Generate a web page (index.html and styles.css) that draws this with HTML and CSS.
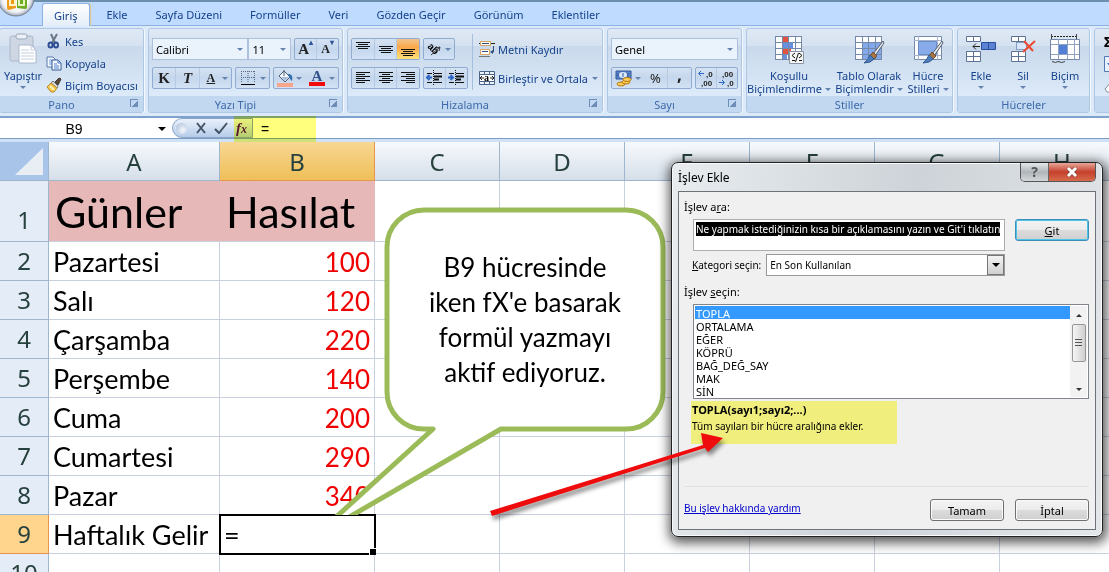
FILE: index.html
```html
<!DOCTYPE html>
<html lang="tr">
<head>
<meta charset="utf-8">
<title>İşlev Ekle</title>
<link rel="stylesheet" href="styles.css">
</head>
<body>
<div class="app">
  <header class="tabs">
    <button class="office" aria-label="Office">
      <svg width="36" height="18" viewBox="0 0 36 18"><defs><radialGradient id="orb" cx=".5" cy=".5" r=".5"><stop offset="0" stop-color="#fff"/><stop offset=".75" stop-color="#f4f5f7"/><stop offset=".9" stop-color="#c9ced6"/><stop offset="1" stop-color="#8a94a3"/></radialGradient></defs><circle cx="16" cy="-2" r="18" fill="url(#orb)" stroke="#7b8798"/><path d="M7 0v8q0 2 2 2l7-2V0z" fill="#f09a1c"/><path d="M17 0v8l8 1q2 0 2-2V0z" fill="#6dab22"/><path d="M10 0v5h5V0" fill="none" stroke="#fff3c8" stroke-width="2"/><path d="M19 0v5h5V0" fill="none" stroke="#e5f5bd" stroke-width="2"/></svg>
    </button>
    <nav class="tablist">
      <button class="tab active">Giriş</button><button class="tab">Ekle</button><button class="tab">Sayfa Düzeni</button><button class="tab">Formüller</button><button class="tab">Veri</button><button class="tab">Gözden Geçir</button><button class="tab">Görünüm</button><button class="tab">Eklentiler</button>
    </nav>
  </header>

  <div class="ribbon">
    <section class="group g-pano">
      <div class="body">
        <button class="big">
          <svg width="30" height="32" viewBox="0 0 30 32"><rect x="2" y="3" width="23" height="25" rx="2" fill="#cdd6e2" stroke="#aab7c8"/><rect x="8" y="1" width="11" height="5" rx="2" fill="#edf1f6" stroke="#98a7bb"/><path d="M11 12h12l5 5v13H11z" fill="#fff" stroke="#a9b9ce"/><path d="M23 12v5h5M13 17h8M13 20h13M13 23h13M13 26h13" fill="none" stroke="#c5d0df"/></svg>
          <span>Yapıştır</span><i class="dd"></i>
        </button>
        <div class="stack">
          <button class="line"><svg width="16" height="16" viewBox="0 0 16 16"><path d="M5 1l4 9M11 1L6 10" stroke="#6b7685" stroke-width="2" fill="none"/><ellipse cx="4.500" cy="12" rx="2" ry="2.500" fill="none" stroke="#2c4d93" stroke-width="2"/><ellipse cx="10" cy="12" rx="2" ry="2.500" fill="none" stroke="#2c4d93" stroke-width="2"/></svg>Kes</button>
          <button class="line"><svg width="16" height="16" viewBox="0 0 16 16"><path d="M1 2h6l2 2v8H1z" fill="#f4f9ff" stroke="#5877ac"/><path d="M3 5h4M3 7h4M3 9h4" stroke="#6f9bdc"/><path d="M6 5h6l3 3v7H6z" fill="#f4f9ff" stroke="#355895"/><path d="M12 5v3h3M8 9h3M8 11h5M8 13h5" fill="none" stroke="#4c7fcc"/></svg>Kopyala</button>
          <button class="line"><svg width="16" height="16" viewBox="0 0 16 16"><path d="M9 5l4-4 2 1-3 6z" fill="#5b4a3a" stroke="#3d352f"/><path d="M7 4l5 5-1 2-6-5z" fill="#d9dde4" stroke="#777"/><path d="M5 6l6 5-3 4H5L1 10z" fill="#f4c84f" stroke="#b98a24"/><path d="M4 9l4 4" stroke="#fff0b8" stroke-width="2"/></svg>Biçim Boyacısı</button>
        </div>
      </div>
      <footer><span>Pano</span><button class="launch" aria-label="Pano ayrıntıları"></button></footer>
    </section>

    <section class="group g-font">
      <div class="body rows">
        <div class="row">
          <label class="combo c-font"><select aria-label="Yazı tipi"><option>Calibri</option></select><i class="dd"></i></label><label class="combo c-size"><select aria-label="Boyut"><option>11</option></select><i class="dd"></i></label>
          <div class="set grow"><button aria-label="Büyüt" class="serif s15">A<sup>▴</sup></button><button aria-label="Küçült" class="serif s12">A<sup>▾</sup></button></div>
        </div>
        <div class="row">
          <div class="set s-bold"><button class="serif s15">K</button><button class="serif s15"><em>T</em></button><button class="serif s12"><u>A</u></button><i class="dd"></i></div>
          <div class="set s-border"><button aria-label="Kenarlık"><svg width="14" height="14" viewBox="0 0 14 14"><path d="M.5 0v12M7 0v12M13.500 0v12M0 .5h14M0 6.500h14" stroke="#566b8c" stroke-dasharray="1 1" fill="none"/><path d="M0 13.500h14" stroke="#000"/></svg></button><i class="dd"></i></div>
          <div class="set s-fill"><button aria-label="Dolgu"><svg width="17" height="18" viewBox="0 0 17 18"><path d="M7 2l6 6-5 5-6-6z" fill="#f3f7fc" stroke="#4b5f7d"/><path d="M4 8h8l-4 4z" fill="#a8bedd"/><path d="M7 7V1" stroke="#4b5f7d"/><path d="M11 5c4 0 5 2 4 7-2-1-2-3-3-4z" fill="#376fb3"/><path d="M0 14h16v4H0z" fill="#f8a68b"/></svg></button><i class="dd"></i><button class="fontcolor serif" aria-label="Yazı rengi">A</button><i class="dd"></i></div>
        </div>
      </div>
      <footer><span>Yazı Tipi</span><button class="launch" aria-label="Yazı tipi ayrıntıları"></button></footer>
    </section>

    <section class="group g-align">
      <div class="body split">
        <div class="rows">
          <div class="row">
            <div class="set three"><button aria-label="Üste hizala"><svg width="16" height="18" viewBox="0 0 16 18"><path d="M1 2.500h14M3 4.500h10M1 6.500h14M3 8.500h10" stroke="#111" fill="none"/></svg></button><button aria-label="Ortala"><svg width="16" height="18" viewBox="0 0 16 18"><path d="M1 6.500h14M3 8.500h10M1 10.500h14M3 12.500h10" stroke="#111" fill="none"/></svg></button><button class="on" aria-label="Alta hizala"><svg width="16" height="18" viewBox="0 0 16 18"><path d="M1 9.500h14M3 11.500h10M1 13.500h14M3 15.500h10" stroke="#111" fill="none"/></svg></button></div>
            <div class="set s-rot"><button aria-label="Yönlendirme"><svg width="17" height="16" viewBox="0 0 17 16"><text x="0" y="8" class="rot" transform="rotate(45 3 8)">ab</text><path d="M5 14L14 6M14 6l-4 1M14 6l-1 4" stroke="#333" fill="none"/></svg></button><i class="dd"></i></div>
          </div>
          <div class="row">
            <div class="set three"><button aria-label="Sola"><svg width="16" height="16" viewBox="0 0 16 16"><path d="M1 2.500h14M1 4.500h9M1 6.500h14M1 8.500h9M1 10.500h14M1 12.500h9" stroke="#111" fill="none"/></svg></button><button aria-label="Ortaya"><svg width="16" height="16" viewBox="0 0 16 16"><path d="M1 2.500h14M4 4.500h8M1 6.500h14M4 8.500h8M1 10.500h14M4 12.500h8" stroke="#111" fill="none"/></svg></button><button aria-label="Sağa"><svg width="16" height="16" viewBox="0 0 16 16"><path d="M1 2.500h14M6 4.500h9M1 6.500h14M6 8.500h9M1 10.500h14M6 12.500h9" stroke="#111" fill="none"/></svg></button></div>
            <div class="set two"><button aria-label="Girintiyi azalt"><svg width="17" height="16" viewBox="0 0 17 16"><path d="M1 3.500h5M8 3.500h8M1 12.500h5M8 12.500h8" stroke="#111"/><path d="M8 6.500h8M8 9.500h5" stroke="#111" stroke-width="2"/><path d="M7.500 0v16" stroke="#111" stroke-dasharray="1 1"/><path d="M6 7.500H2M3.500 5L1 7.500 3.500 10" stroke="#2e66c4" stroke-width="2" fill="none"/></svg></button><button aria-label="Girintiyi artır"><svg width="17" height="16" viewBox="0 0 17 16"><path d="M1 3.500h5M8 3.500h8M1 12.500h5M8 12.500h8" stroke="#111"/><path d="M8 6.500h8M8 9.500h5" stroke="#111" stroke-width="2"/><path d="M7.500 0v16" stroke="#111" stroke-dasharray="1 1"/><path d="M0 7.500h4M2.500 5L5 7.500 2.500 10" stroke="#2e66c4" stroke-width="2" fill="none"/></svg></button></div>
          </div>
        </div>
        <div class="wraps">
          <button class="line"><svg width="16" height="16" viewBox="0 0 16 16"><path d="M0 2.500h16" stroke="#222"/><path d="M1.500.5h10v4h-10zM1.500 8.500h9v5h-9z" fill="#fff" stroke="#d9a462"/><path d="M3 2.500h7M3 10.500h6M14.500 5v6H12" stroke="#30507c" fill="none"/><path d="M11 11l3-2v4z" fill="#30507c"/><path d="M0 15.500h11" stroke="#777"/></svg>Metni Kaydır</button>
          <button class="line"><svg width="16" height="16" viewBox="0 0 16 16"><path d="M.5 1.500h15v13H.5zM5.500 1.500v13M10.500 1.500v13M.5 4.500h15M.5 11.500h15" fill="#eaf2fc" stroke="#4c6487"/><path d="M1 5h14v6H1z" fill="#fff"/><path d="M1 8h4M11 8h4" stroke="#222"/><path d="M3 6L1 8l2 2M13 6l2 2-2 2" stroke="#222" fill="none"/><text x="5" y="11" class="merge">a</text></svg>Birleştir ve Ortala<i class="dd"></i></button>
        </div>
      </div>
      <footer><span>Hizalama</span><button class="launch" aria-label="Hizalama ayrıntıları"></button></footer>
    </section>

    <section class="group g-num">
      <div class="body rows">
        <div class="row"><label class="combo c-num"><select aria-label="Sayı biçimi"><option>Genel</option></select><i class="dd"></i></label></div>
        <div class="row">
          <div class="set s-money"><button aria-label="Para birimi"><svg width="17" height="17" viewBox="0 0 17 17"><path d="M1 1h15v8H1z" fill="#5c85c8" stroke="#2d549a"/><ellipse cx="8" cy="5" rx="4" ry="3" fill="#dae8fa"/><path d="M8 3v4M3 3v4M13 3v4" stroke="#2d549a"/><g fill="#ffcc57" stroke="#b57a15"><ellipse cx="6" cy="14" rx="4" ry="2"/><ellipse cx="11" cy="12" rx="4" ry="2"/><ellipse cx="12" cy="9.500" rx="4" ry="2"/></g></svg></button><i class="dd"></i><button class="pct">%</button><button class="comma">,</button></div>
          <div class="set s-dec"><button aria-label="Ondalık artır"><svg width="18" height="20" viewBox="0 0 18 20"><path d="M7 5.500H2M4 3L1.500 5.500 4 8" stroke="#2967c7" fill="none"/><text x="9" y="9" class="dec">,0</text><text x="4" y="18" class="dec">,00</text></svg></button><button aria-label="Ondalık azalt"><svg width="18" height="20" viewBox="0 0 18 20"><text x="4" y="9" class="dec">,00</text><path d="M1 14.500h5M4 12l2.500 2.500L4 17" stroke="#2967c7" fill="none"/><text x="9" y="18" class="dec">,0</text></svg></button></div>
        </div>
      </div>
      <footer><span>Sayı</span><button class="launch" aria-label="Sayı ayrıntıları"></button></footer>
    </section>

    <section class="group g-style">
      <div class="body bigs">
        <button class="big w1"><svg width="32" height="32" viewBox="0 0 32 32"><path d="M2 3h27v24H2z" fill="#fff"/><path d="M9 3h6v6H9z" fill="#e2523f"/><path d="M9 9h11v6H9z" fill="#6790e0"/><path d="M9 15h9v6H9z" fill="#e2523f"/><path d="M9 21h5v6H9z" fill="#6790e0"/><path d="M2.500 3v24M9.500 3v24M15.500 3v24M22.500 3v24M28.500 3v24M2 3.500h27M2 9.500h27M2 15.500h27M2 21.500h27M2 26.500h27" stroke="#7488aa"/><path d="M16.500 18.500h14v12h-14z" fill="#f7f7f7" stroke="#8b95a5"/><path d="M22 20l-3 2.500 3 2.500M26 20l3 2.500-3 2.500M19 27.500h3M26 27.500h3M22.500 29l3-9" stroke="#111" fill="none"/></svg><span>Koşullu</span><span>Biçimlendirme<i class="dd"></i></span></button>
        <button class="big w2"><svg width="32" height="32" viewBox="0 0 32 32"><path d="M2 3h27v24H2z" fill="#fff"/><path d="M9 9h20v18H9z" fill="#83a9ea"/><path d="M2.500 3v24M9.500 3v24M15.500 3v24M22.500 3v24M28.500 3v24M2 3.500h27M2 9.500h27M2 15.500h27M2 21.500h27M2 26.500h27" stroke="#7488aa"/><path d="M30 8L20 21l2 2 9-13z" fill="#e3e7ec" stroke="#58606c"/><path d="M20 19l4 4-3 3-4-3z" fill="#a87545" stroke="#6f4b2a"/><path d="M17 22l4 4q-3 4-10 4 4-3 6-8z" fill="#4e7fbd" stroke="#315b92"/></svg><span>Tablo Olarak</span><span>Biçimlendir<i class="dd"></i></span></button>
        <button class="big w3"><svg width="32" height="32" viewBox="0 0 32 32"><path d="M2.500 3.500h27v23h-27z" fill="#fff" stroke="#7488aa"/><path d="M6.500 3v24M25.500 3v24M2 7.500h27M2 22.500h27" stroke="#a4b3cb"/><path d="M6.500 8.500h18v13h-18z" fill="#88ace9" stroke="#6c8cc9"/><path d="M30 8L20 21l2 2 9-13z" fill="#e3e7ec" stroke="#58606c"/><path d="M20 19l4 4-3 3-4-3z" fill="#a87545" stroke="#6f4b2a"/><path d="M17 22l4 4q-3 4-10 4 4-3 6-8z" fill="#4e7fbd" stroke="#315b92"/></svg><span>Hücre</span><span>Stilleri<i class="dd"></i></span></button>
      </div>
      <footer><span>Stiller</span></footer>
    </section>

    <section class="group g-cell">
      <div class="body bigs">
        <button class="big w4"><svg width="32" height="32" viewBox="0 0 32 32"><path d="M1.500 3.500h14v5h-14zM8.500 3v5M1.500 18.500h14v10h-14zM8.500 18v10M1 23.500h14" fill="#fff" stroke="#5d7294"/><path d="M16.500 9.500h14v7h-14zM23.500 9v7" fill="#5b82d4" stroke="#284d99"/><path d="M15 13.500H8M11 10.500l-3 3 3 3" stroke="#222" fill="none"/></svg><span>Ekle</span><i class="dd"></i></button>
        <button class="big w4"><svg width="32" height="32" viewBox="0 0 32 32"><path d="M4.500 3.500h14v5h-14zM11.500 3v5M4.500 18.500h14v10h-14zM11.500 18v10M4 23.500h14" fill="#fff" stroke="#5d7294"/><path d="M9.500 9.500h10v7h-10z" fill="#d8e7fc" stroke="#37588c" stroke-dasharray="1 1"/><path d="M17 8l9 10M28 8L16 19" stroke="#ed492f" stroke-width="2"/></svg><span>Sil</span><i class="dd"></i></button>
        <button class="big w4"><svg width="32" height="32" viewBox="0 0 32 32"><path d="M1.500 6.500h29v20h-29z" fill="#fff" stroke="#7488aa"/><path d="M9.500 6v20M18.500 6v20M25.500 6v20M2 11.500h28M2 21.500h28" stroke="#8fa2bf"/><path d="M10 12h8v9h-8z" fill="#527fd6"/><path d="M2 3.500h26" stroke="#222" stroke-dasharray="2 1"/><path d="M2.500 1v5M27.500 1v5M3 28.500q4 2 6 0 4 2 7 0" stroke="#444" fill="none"/></svg><span>Biçim</span><i class="dd"></i></button>
      </div>
      <footer><span>Hücreler</span></footer>
    </section>

    <section class="group g-edit">
      <div class="body edits"><button class="sigma">Σ</button><button aria-label="Doldur"><svg width="16" height="16" viewBox="0 0 16 16"><path d="M.5.5h15v15H.5z" fill="#e8f1ff" stroke="#5275b6"/><path d="M6 3h4v4h3l-5 6-5-6h3z" fill="#3c76dd"/></svg></button><button aria-label="Temizle"><svg width="16" height="16" viewBox="0 0 16 16"><path d="M1 11l7-8h8v6l-5 5H3z" fill="#fff" stroke="#878f9b"/></svg></button></div>
      <footer></footer>
    </section>
  </div>

  <div class="formulabar">
    <input class="name" aria-label="Ad kutusu" value="B9">
    <button class="namedrop" aria-label="Ad listesi"><i class="tri"></i></button>
    <div class="fxtools">
      <i class="knob"></i>
      <button aria-label="İptal et"><svg width="12" height="12" viewBox="0 0 12 12"><path d="M2 1l8 10M10 1L2 11" stroke="#465366" stroke-width="2"/></svg></button>
      <button aria-label="Gir"><svg width="14" height="12" viewBox="0 0 14 12"><path d="M1 7l4 4 8-10" fill="none" stroke="#465366" stroke-width="2"/></svg></button>
      <button class="fx" aria-label="İşlev ekle">f<small>x</small></button>
    </div>
    <input class="formula" aria-label="Formül" value="=">
    <div class="marker"></div>
  </div>

  <main class="sheet">
    <table>
      <colgroup><col class="cr"><col class="ca"><col class="cb"><col class="cx"><col class="cx"><col class="cx"><col class="cx"><col class="cx"><col class="cx"></colgroup>
      <thead><tr><th class="corner"><svg width="30" height="32" viewBox="0 0 30 32"><path d="M28 2v27H0z" fill="#e9eef5"/></svg></th><th>A</th><th class="sel">B</th><th>C</th><th>D</th><th>E</th><th>F</th><th>G</th><th>H</th></tr></thead>
      <tbody>
        <tr class="first"><th>1</th><td>Günler</td><td>Hasılat</td><td></td><td></td><td></td><td></td><td></td><td></td></tr>
        <tr><th>2</th><td>Pazartesi</td><td class="n">100</td><td></td><td></td><td></td><td></td><td></td><td></td></tr>
        <tr><th>3</th><td>Salı</td><td class="n">120</td><td></td><td></td><td></td><td></td><td></td><td></td></tr>
        <tr><th>4</th><td>Çarşamba</td><td class="n">220</td><td></td><td></td><td></td><td></td><td></td><td></td></tr>
        <tr><th>5</th><td>Perşembe</td><td class="n">140</td><td></td><td></td><td></td><td></td><td></td><td></td></tr>
        <tr><th>6</th><td>Cuma</td><td class="n">200</td><td></td><td></td><td></td><td></td><td></td><td></td></tr>
        <tr><th>7</th><td>Cumartesi</td><td class="n">290</td><td></td><td></td><td></td><td></td><td></td><td></td></tr>
        <tr><th>8</th><td>Pazar</td><td class="n">340</td><td></td><td></td><td></td><td></td><td></td><td></td></tr>
        <tr><th class="sel">9</th><td>Haftalık Gelir</td><td class="cursor">=</td><td></td><td></td><td></td><td></td><td></td><td></td></tr>
        <tr><th>10</th><td></td><td></td><td></td><td></td><td></td><td></td><td></td><td></td></tr>
      </tbody>
    </table>
  </main>

  <div class="callout">
    <svg width="340" height="310" viewBox="0 0 340 310"><path d="M98 4H300a37 37 0 0 1 37 37V186a37 37 0 0 1-37 37H175L-13 332 107 223H98a37 37 0 0 1-37-37V41A37 37 0 0 1 98 4z" fill="#fff" stroke="#9bbb59" stroke-width="5" stroke-linejoin="round"/></svg>
    <p>B9 hücresinde<br>iken fX'e basarak<br>formül yazmayı<br>aktif ediyoruz.</p>
  </div>

  <form class="dialog" role="dialog" aria-label="İşlev Ekle">
    <div class="titlebar"><span>İşlev Ekle</span>
      <div class="winbtns"><button type="button" class="help">?</button><button type="button" class="close" aria-label="Kapat"><svg width="12" height="10" viewBox="0 0 12 10"><path d="M2 1l8 8M10 1L2 9" stroke="#6d3a35" stroke-width="4"/><path d="M2 1l8 8M10 1L2 9" stroke="#fff" stroke-width="3"/></svg></button></div>
    </div>
    <div class="panel">
      <label class="lab" for="q">İşlev a<u>r</u>a:</label>
      <div class="search"><div class="searchbox"><input id="q" value="Ne yapmak istediğinizin kısa bir açıklamasını yazın ve Git'i tıklatın"></div><button type="button" class="btn default"><u>G</u>it</button></div>
      <div class="cat"><label for="cat"><u>K</u>ategori seçin:</label><div class="catbox"><select id="cat"><option>En Son Kullanılan</option></select><span class="catarrow"><i class="tri"></i></span></div></div>
      <label class="lab second" for="fn">İşlev <u>s</u>eçin:</label>
      <div class="listbox">
        <select id="fn" size="7"><option selected>TOPLA</option><option>ORTALAMA</option><option>EĞER</option><option>KÖPRÜ</option><option>BAĞ_DEĞ_SAY</option><option>MAK</option><option>SİN</option></select>
        <div class="scroll"><i class="tri up"></i><span class="thumb"></span><i class="tri down"></i></div>
      </div>
      <div class="desc"><b>TOPLA(sayı1;sayı2;...)</b><span>Tüm sayıları bir hücre aralığına ekler.</span></div>
      <div class="foot"><a href="#">Bu işlev hakkında yardım</a><button type="button" class="btn">Tamam</button><button type="button" class="btn">İptal</button></div>
    </div>
  </form>

  <svg class="arrow" width="250" height="96" viewBox="0 0 250 96"><path d="M5 83L218 17 216 5 238 10 223 24 220 20 7 88z" fill="#ee0c0c"/></svg>
</div>
</body>
</html>
```
FILE: styles.css
```css
* { box-sizing: border-box; }
body { margin: 0; font-family: "Noto Sans", "Open Sans", sans-serif; font-size: 11px; color: #000; }
button { font: inherit; color: inherit; background: none; border: 0; padding: 0; margin: 0; }
select, input { font: inherit; color: inherit; border: 0; padding: 0; margin: 0; background: none; appearance: none; outline: 0; min-width: 0; border-radius: 0; }
svg { display: block; flex: none; }
.app { position: relative; height: 100vh; overflow: hidden; display: flex; flex-direction: column; background: #fff; }

.tabs { height: 26px; flex: none; display: flex; background: #bfdbff; border-top: 2px solid #6d8fae; border-bottom: 1px solid #8db2e3; }
.office { width: 42px; position: relative; z-index: 2; }
.office svg { position: absolute; left: 0; top: -2px; }
.tablist { display: flex; height: 24px; padding-top: 1px; color: #15428b; }
.tab { padding: 0 14px; height: 23px; border-radius: 3px 3px 0 0; white-space: nowrap; }
.tab.active { padding: 0 11px; margin-right: 3px; background: linear-gradient(#fff, #e3edf8); border: 1px solid #8db2e3; border-bottom: 0; box-shadow: 1px 0 1px #e5c987; }

.ribbon { flex: none; height: 92px; display: flex; gap: 4px; padding: 2px 0 3px; background: #dbe9f9; border-bottom: 2px solid #7ea2ce; color: #15428b; overflow: hidden; }
.group { flex: none; display: flex; flex-direction: column; border: 1px solid #aec8e4; border-radius: 3px; background: linear-gradient(#dfe8f5 0, #d6e2f0 20%, #c9d9eb 21%, #dceaf9 80%); box-shadow: 1px 0 0 #f3f8fe; }
.group .body { flex: 1; display: flex; min-height: 0; }
.group footer { height: 16px; position: relative; display: flex; align-items: center; justify-content: center; background: #c1d8f0; color: #3e6aaa; padding-right: 20px; }
.g-pano { width: 145px; margin-left: -1px; }
.g-font { width: 195px; }
.g-align { width: 256px; }
.g-num { width: 135px; }
.g-style { width: 207px; }
.g-cell { width: 133px; }
.g-edit { width: 60px; }
.g-style footer, .g-cell footer { padding-right: 0; }
.launch { position: absolute; right: 5px; top: 3px; width: 8px; height: 8px; border-left: 1px solid #6d8cb8; border-top: 1px solid #6d8cb8; background: linear-gradient(135deg, transparent 50%, #6d8cb8 51%); }
.dd { display: inline-block; flex: none; width: 0; height: 0; border: 3px solid transparent; border-top-color: #6683b0; border-bottom: 0; }

.big { display: flex; flex-direction: column; align-items: center; line-height: 13px; padding-top: 4px; white-space: nowrap; }
.big svg { margin-bottom: 4px; }
.big > .dd { margin-top: 4px; }
.big span .dd { margin: 0 0 2px 3px; }
.g-pano .big { width: 46px; }
.stack { display: flex; flex-direction: column; padding-top: 1px; }
.line { display: flex; align-items: center; gap: 3px; height: 22px; white-space: nowrap; }
.line .dd { margin-left: 1px; }
.rows { display: flex; flex-direction: column; gap: 7px; padding: 9px 3px 0; }
.group .body.rows { flex-direction: column; }
.row { display: flex; gap: 3px; height: 22px; flex: none; }
.combo { display: flex; align-items: center; justify-content: space-between; height: 22px; padding: 0 4px 0 3px; background: #eaf2fb; border: 1px solid #abc1de; color: #000; }
.combo select { flex: 1; }
.c-font { width: 97px; }
.c-size { width: 43px; margin-left: -3px; }
.c-num { flex: 1; }
.set { display: flex; align-items: center; height: 22px; border: 1px solid #8fabd2; border-radius: 2px; background: linear-gradient(#d5e2f2, #c5d7ed 50%, #d3e2f4); color: #222; }
.set button { flex: 1; height: 20px; display: flex; align-items: center; justify-content: center; border-right: 1px solid #b7cae3; }
.set button:last-child, .set button:has(+ .dd) { border-right: 0; }
.set .dd { margin-right: 3px; }
.grow { width: 45px; margin-left: auto; }
.serif { font-family: "Liberation Serif", serif; font-weight: 700; }
.s15 { font-size: 15px; }
.s12 { font-size: 12px; }
.set sup { font-size: 8px; line-height: 8px; align-self: flex-start; color: #2c5599; }
.s-bold { width: 80px; }
.s-border { width: 35px; }
.s-fill { flex: 1; }
.set .fontcolor { font-size: 15px; line-height: 13px; color: #33548c; flex: none; width: 16px; height: 16px; margin-left: 4px; margin-right: 4px; border-bottom: 4px solid #f00c0c; }
.three { width: 69px; }
.three .on { background: linear-gradient(#f3c590, #f9a84a 40%, #ffe27a); }
.s-rot { width: 32px; }
.two { width: 45px; }
.rot { font: 700 10px "Liberation Sans", sans-serif; }
.merge { font: 700 10px "Liberation Serif", serif; }
.dec { font: 700 8px "Liberation Sans", sans-serif; fill: #222; }
.wraps { display: flex; flex-direction: column; gap: 7px; margin: 5px 0 6px 1px; padding: 4px 0 0 6px; border-left: 1px solid #a5bfdf; }
.s-money { width: 81px; }
.set .pct { font-size: 13px; }
.set .comma { font-size: 17px; font-weight: 700; line-height: 10px; padding-bottom: 6px; }
.s-dec { flex: 1; }
.w1 { width: 84px; }
.w2 { width: 76px; }
.w3 { width: 42px; }
.w4 { width: 42px; }
.g-cell .bigs { padding-left: 2px; }
.group .edits { flex-direction: column; gap: 6px; padding: 5px 0 0 9px; align-items: flex-start; }
.sigma { font-weight: 700; color: #000; font-size: 14px; line-height: 16px; }

.formulabar { flex: none; position: relative; height: 24px; display: flex; background: #fff; border-bottom: 3px solid #cfe2f8; box-shadow: inset 0 -1px 0 #7f9dc0; font: 14px "Liberation Sans", Arial, sans-serif; }
.name { width: 148px; text-align: center; }
.namedrop { width: 28px; display: flex; align-items: center; justify-content: center; margin-right: -4px; }
.tri { width: 0; height: 0; border: 4px solid transparent; border-top-color: #000; border-bottom: 0; }
.fxtools { width: 81px; display: flex; align-items: center; justify-content: space-between; padding: 0 5px 0 3px; border: 1px solid #89a5c8; border-radius: 11px 0 0 11px; background: linear-gradient(#e9f1fb, #b5cce9); height: 20px; }
.knob { width: 11px; height: 11px; border-radius: 50%; background: radial-gradient(circle at 65% 65%, #f4f8fc, #a5bad4); }
.fx { font: italic 700 15px/18px "Liberation Serif", serif; color: #5b1a5f; }
.fx small { font-size: 12px; }
.formula { flex: 1; padding-left: 8px; }
.marker { position: absolute; left: 234px; top: -2px; width: 82px; height: 26px; background: #ffff7d; mix-blend-mode: multiply; }

.sheet { flex: 1; min-height: 0; overflow: hidden; font-family: "Noto Sans", sans-serif; }
table { table-layout: fixed; width: 1125px; border-collapse: separate; border-spacing: 0; }
.cr { width: 49px; }
.ca { width: 171px; }
.cb { width: 155px; }
.cx { width: 125px; }
th, td { padding: 0; height: 39px; overflow: hidden; white-space: nowrap; border-right: 1px solid #c9d0e0; border-bottom: 1px solid #c9d0e0; font-weight: 400; font-size: 27px; line-height: 38px; }
th { color: #27413e; background: #e4ecf7; border-color: #9eb6ce; font-size: 24px; }
thead th { background: linear-gradient(#f7fafd, #d5dee9); padding-top: 2px; line-height: 36px; }
thead th.corner { background: #a9c4e9; }
.corner svg { margin-left: 15px; }
th.sel { background: #ffd58d; border-color: #e8964d; }
thead th.sel { background: linear-gradient(#f8d793, #efbf58); }
td { padding: 2px 4px 0; line-height: 36px; font-family: Lato, sans-serif; }
.first th, .first td { height: 61px; }
.first th { vertical-align: bottom; line-height: 42px; }
.first td { font-size: 43px; line-height: 58px; padding-left: 6px; }
.first td:nth-child(2), .first td:nth-child(3) { background: #e6b8b7; border-right-color: #e6b8b7; }
td.n { text-align: right; color: #f00000; font-size: 26px; }
.cursor { position: relative; overflow: visible; outline: 2px solid #000; outline-offset: -1px; }
.cursor::after { content: ""; position: absolute; right: -2px; bottom: -2px; width: 6px; height: 6px; background: #000; border-left: 1px solid #fff; border-top: 1px solid #fff; }

.callout { position: absolute; left: 326px; top: 206px; width: 340px; height: 309px; overflow: hidden; }
.callout svg { position: absolute; left: 0; top: 0; }
.callout p { position: relative; margin: 44px 0 0 61px; width: 276px; text-align: center; font: 26px/35px Lato, sans-serif; }

.dialog { position: absolute; left: 671px; top: 162px; width: 432px; padding: 0 6px 6px; border: 1px solid #222; border-radius: 7px; background: linear-gradient(100deg, #e8ecef, #cdd3d8 50%, #e4e7ea); box-shadow: inset 0 0 0 1px #f8fafc, 1px 3px 12px 3px rgba(0,0,0,.65); }
.titlebar { height: 28px; display: flex; justify-content: space-between; align-items: center; }
.titlebar > span { font-size: 12px; }
.winbtns { display: flex; align-self: flex-start; height: 19px; border: 1px solid #555; border-top: 0; border-radius: 0 0 5px 5px; overflow: hidden; }
.help { width: 28px; background: linear-gradient(#e5e8ea, #b1b6bb 50%, #d3d6d9); border-right: 1px solid #666; font-weight: 700; font-size: 14px; line-height: 18px; color: #555; }
.close { width: 46px; display: flex; align-items: center; justify-content: center; background: linear-gradient(#e8a79a, #c4402c 50%, #d66b4b); }
.panel { border: 1px solid #6d7278; background: #f0f0f0; padding: 7px 6px 8px 5px; display: flex; flex-direction: column; }
.lab { line-height: 15px; }
.search { display: flex; align-items: flex-start; gap: 10px; margin: 5px 0 0 9px; }
.searchbox { flex: 1; min-width: 0; height: 32px; border: 1px solid #abadb3; background: #fff; padding: 2px; line-height: 13px; }
.searchbox input { display: block; field-sizing: content; max-width: 100%; height: 14px; background: #000; color: #fff; }
.searchbox input, .cat, .desc span, .foot a { font-size: 10px; }
.btn { width: 74px; height: 22px; border: 1px solid #707070; border-radius: 3px; background: linear-gradient(#f3f3f3, #ebebeb 50%, #dcdcdc 51%, #cfcfcf); box-shadow: inset 0 0 0 1px #fafafa; }
.btn.default { border-color: #3c8fb5; box-shadow: inset 0 0 0 1px #4fc4ea; }
.cat { display: flex; align-items: center; gap: 5px; margin: 3px 84px 0 8px; height: 22px; }
.cat label { white-space: nowrap; }
.catbox { flex: 1; display: flex; height: 22px; border: 1px solid #999; background: #fff; padding-left: 3px; }
.catbox select { flex: 1; }
.catarrow { width: 17px; display: flex; align-items: center; justify-content: center; border: 1px solid #777; background: linear-gradient(#f3f3f3, #d0d0d0); }
.second { margin-top: 8px; }
.listbox { display: flex; margin: 5px 0 0 9px; height: 95px; border: 1px solid #82868c; background: #fff; padding: 1px; }
.listbox select { flex: 1; height: 91px; overflow: hidden; scrollbar-width: none; }
.listbox option { height: 13px; min-height: 13px; line-height: 13px; padding: 0 1px; }
.listbox option:checked { background: #3399ff linear-gradient(#3399ff, #3399ff); color: #fff; }
.scroll { width: 17px; display: flex; flex-direction: column; align-items: center; padding: 8px 1px 6px; background: #f2f2f2; }
.up { border: 3px solid transparent; border-bottom-color: #333; border-top: 0; }
.down { border: 3px solid transparent; border-top-color: #333; border-bottom: 0; margin-top: auto; }
.thumb { width: 14px; height: 38px; margin-top: 7px; border: 1px solid #979797; border-radius: 2px; background: repeating-linear-gradient(#555 0 1px, transparent 1px 3px) center / 7px 8px no-repeat, linear-gradient(90deg, #f5f5f5, #cfcfcf); }
.desc { display: flex; flex-direction: column; width: 206px; height: 43px; margin: 2px 0 0 7px; padding: 1px; background: #f0ee7c; line-height: 16px; white-space: nowrap; }
.foot { display: flex; align-items: flex-start; gap: 11px; margin-top: 42px; padding-top: 12px; border-top: 1px solid #dfe3e6; }
.foot a { color: #00c; margin-right: auto; line-height: 18px; }
.arrow { position: absolute; left: 485px; top: 428px; filter: drop-shadow(2px 4px 2px rgba(0,0,0,.45)); }
```
